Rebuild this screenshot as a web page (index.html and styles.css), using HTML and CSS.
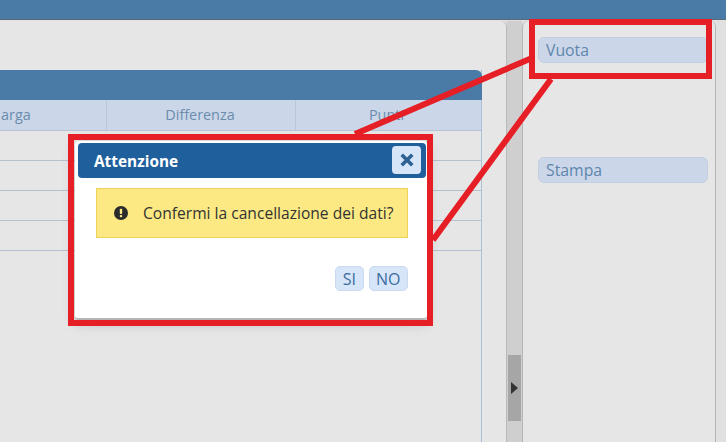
FILE: index.html
```html
<!DOCTYPE html>
<html lang="en">
<head>
    <meta charset="UTF-8">
    <title>Attenzione</title>
    <link rel="stylesheet" href="styles.css">
</head>
<body>

    <div class="topbar"></div>

    <div class="main">
        <div class="left-panel">
            <div class="grid">
                <div class="grid-title"></div>
                <div class="grid-head">
                    <div class="cell first">arga</div>
                    <div class="cell">Differenza</div>
                    <div class="cell">Punti</div>
                </div>
                <div class="grid-row"></div>
                <div class="grid-row"></div>
                <div class="grid-row"></div>
                <div class="grid-row"></div>
            </div>
        </div>

        <div class="splitter">
            <div class="thumb"><div class="arrow"></div></div>
        </div>

        <div class="right-panel">
            <button class="side-btn vuota">Vuota</button>
            <button class="side-btn">Stampa</button>
        </div>
    </div>

    <div class="modal">
        <div class="modal-head">
            <span class="modal-title">Attenzione</span>
            <button class="close-btn">
                <svg width="14" height="14" viewBox="0 0 14 14">
                    <path d="M3 3 L11 11 M11 3 L3 11" stroke="#2f6294" stroke-width="3.6" stroke-linecap="square"/>
                </svg>
            </button>
        </div>
        <div class="alert">
            <svg class="alert-icon" width="14" height="14" viewBox="0 0 14 14">
                <circle cx="7" cy="7" r="7" fill="#2b2b2b"/>
                <rect x="5.8" y="2.8" width="2.4" height="5.2" rx="0.8" fill="#fce983"/>
                <rect x="5.8" y="9" width="2.4" height="2.3" rx="0.8" fill="#fce983"/>
            </svg>
            <span>Confermi la cancellazione dei dati?</span>
        </div>
        <div class="modal-actions">
            <button class="small-btn">SI</button>
            <button class="small-btn">NO</button>
        </div>
    </div>

    <!-- red annotation drawn over the screenshot -->
    <svg class="marks" width="726" height="442" viewBox="0 0 726 442">
        <g fill="none" stroke="#e61e25" stroke-width="6">
            <rect x="532" y="22" width="177" height="54"/>
            <rect x="71" y="137" width="359" height="186"/>
            <path d="M355 134 L532 58"/>
            <path d="M551 79 L433 240"/>
        </g>
    </svg>

</body>
</html>
```

FILE: styles.css
```css
html, body {
    margin: 0;
    padding: 0;
}

body {
    width: 726px;
    height: 442px;
    overflow: hidden;
    position: relative;
    display: flex;
    flex-direction: column;
    font-family: "Open Sans", sans-serif;
    background-color: #e0e0e0;
}

button {
    font-family: inherit;
    cursor: pointer;
}

.topbar {
    height: 19px;
    flex-shrink: 0;
    background-color: #4a7ba6;
    border-bottom: 1px solid #5a6b78;
}

.main {
    flex: 1;
    display: flex;
    padding-top: 1px;
    min-height: 0;
}

.left-panel {
    width: 507px;
    box-sizing: border-box;
    padding-top: 49px;
    background-color: #e6e6e6;
    border-right: 1px solid #b9b9b9;
    border-top-right-radius: 6px;
}

.grid {
    width: 482px;
    height: 100%;
    box-sizing: border-box;
    border-right: 1px solid #a9c1d6;
}

.grid-title {
    height: 30px;
    background-color: #4a7ba6;
    border-top-right-radius: 6px;
    margin-right: -1px;
}

.grid-head {
    display: grid;
    grid-template-columns: 107px 189px 1fr;
    height: 31px;
    box-sizing: border-box;
    background-color: #cbd7e8;
    border-bottom: 1px solid #b5c3d3;
}

.cell {
    display: flex;
    align-items: center;
    justify-content: center;
    padding: 0 2px 1px 0;
    font-size: 14.4px;
    color: #6a8cae;
    border-right: 1px solid #b8c6d8;
}

.cell:last-child {
    padding-right: 4px;
    border-right: none;
}

.cell.first {
    justify-content: flex-start;
    padding-left: 1px;
}

.grid-row {
    height: 30px;
    box-sizing: border-box;
    border-bottom: 1px solid #b4c2cf;
}

.splitter {
    width: 15px;
    position: relative;
    background-color: #cfcfcf;
}

.thumb {
    position: absolute;
    left: 1px;
    top: 334px;
    width: 13px;
    height: 66px;
    background-color: #a6a6a6;
    display: flex;
    align-items: center;
}

.arrow {
    margin-left: 3px;
    border-left: 7px solid #333;
    border-top: 6px solid transparent;
    border-bottom: 6px solid transparent;
}

.right-panel {
    width: 194px;
    box-sizing: border-box;
    padding: 16px 7px 0 15px;
    display: flex;
    flex-direction: column;
    gap: 94px;
    background-color: #e6e6e6;
    border-left: 1px solid #b4b4b4;
    border-right: 1px solid #b4b4b4;
    border-top-left-radius: 6px;
    border-top-right-radius: 6px;
}

.side-btn {
    height: 26px;
    padding: 0 0 0 7px;
    text-align: left;
    font-size: 15.8px;
    color: #5f86ad;
    background-color: #cbd7e8;
    border: 1px solid #c1cfe0;
    border-radius: 6px;
}

.modal {
    position: absolute;
    left: 75px;
    top: 141px;
    width: 352px;
    height: 179px;
    box-sizing: border-box;
    padding: 2px 1px 0 3px;
    background-color: #fff;
    border-radius: 4px;
    border-bottom: 2px solid #b5b5b5;
    box-shadow: 0 3px 14px rgba(0, 0, 0, 0.2);
}

.modal-head {
    height: 35px;
    box-sizing: border-box;
    padding: 3px 5px 0 16px;
    display: flex;
    justify-content: space-between;
    background-color: #1f5f9c;
    border-radius: 4px;
}

.modal-title {
    margin-top: 5px;
    font-size: 15.4px;
    font-weight: 700;
    color: #fff;
}

.close-btn {
    width: 29px;
    height: 28px;
    padding: 0;
    display: flex;
    align-items: center;
    justify-content: center;
    background-color: #d6e5f8;
    border: none;
    border-radius: 4px;
}

.alert {
    margin: 10px 18px 0 18px;
    height: 50px;
    box-sizing: border-box;
    padding-left: 17px;
    display: flex;
    align-items: center;
    gap: 15px;
    font-size: 15.6px;
    color: #333;
    background-color: #fce983;
    border: 1px solid #efd159;
}

.alert-icon {
    flex-shrink: 0;
}

.modal-actions {
    margin: 28px 18px 0 0;
    display: flex;
    justify-content: flex-end;
    gap: 5px;
}

.small-btn {
    height: 25px;
    padding: 0 6.5px;
    font-size: 16px;
    color: #3c6c9f;
    background-color: #d6e5f8;
    border: 1px solid #c9daf0;
    border-radius: 5px;
}

.marks {
    position: absolute;
    left: 0;
    top: 0;
    pointer-events: none;
}
```
